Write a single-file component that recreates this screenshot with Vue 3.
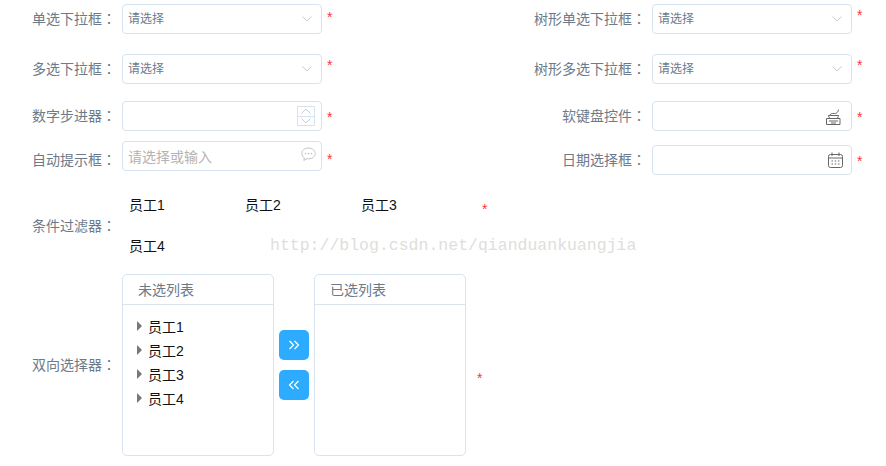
<script setup>
const staff = ['员工1', '员工2', '员工3', '员工4']
</script>

<template>
  <div class="page">
    <div class="top">
      <div class="col">
        <div class="field">
          <label class="label">单选下拉框<span class="colon">：</span></label>
          <div class="input"><span class="value">请选择</span>
            <svg class="chev" width="10" height="6" viewBox="0 0 10 6"><path d="M.5.5 5 5 9.5.5" /></svg>
          </div>
          <span class="star s1">*</span>
        </div>
        <div class="field gap20">
          <label class="label">多选下拉框<span class="colon">：</span></label>
          <div class="input"><span class="value">请选择</span>
            <svg class="chev" width="10" height="6" viewBox="0 0 10 6"><path d="M.5.5 5 5 9.5.5" /></svg>
          </div>
          <span class="star s2">*</span>
        </div>
        <div class="field gap17">
          <label class="label">数字步进器<span class="colon">：</span></label>
          <div class="input">
            <div class="stepper">
              <span class="step"><svg width="10" height="6" viewBox="0 0 10 6"><path d="M.5 5.5 5 1l4.500 4.500" /></svg></span>
              <span class="step"><svg width="10" height="6" viewBox="0 0 10 6"><path d="M.5.5 5 5 9.500.5" /></svg></span>
            </div>
          </div>
          <span class="star s3">*</span>
        </div>
        <div class="field gap10 low">
          <label class="label">自动提示框<span class="colon">：</span></label>
          <div class="input"><span class="hint">请选择或输入</span>
            <svg class="tail up" width="15" height="15" viewBox="0 0 15 15">
              <path class="bubble" d="M7.500 1C3.700 1 .8 3.400.8 6.500c0 1.800 1 3.300 2.500 4.300l-.5 2.700 3-1.800c.5.100 1.100.1 1.700.1 3.800 0 6.700-2.300 6.700-5.300S11.300 1 7.500 1Z" />
              <circle cx="4.500" cy="6.600" r=".8" /><circle cx="7.500" cy="6.600" r=".8" /><circle cx="10.500" cy="6.600" r=".8" />
            </svg>
          </div>
          <span class="star s4">*</span>
        </div>
      </div>

      <div class="col">
        <div class="field">
          <label class="label">树形单选下拉框<span class="colon">：</span></label>
          <div class="input"><span class="value">请选择</span>
            <svg class="chev" width="10" height="6" viewBox="0 0 10 6"><path d="M.5.5 5 5 9.5.5" /></svg>
          </div>
          <span class="star s5">*</span>
        </div>
        <div class="field gap20">
          <label class="label">树形多选下拉框<span class="colon">：</span></label>
          <div class="input"><span class="value">请选择</span>
            <svg class="chev" width="10" height="6" viewBox="0 0 10 6"><path d="M.5.5 5 5 9.5.5" /></svg>
          </div>
          <span class="star s2">*</span>
        </div>
        <div class="field gap17">
          <label class="label">软键盘控件<span class="colon">：</span></label>
          <div class="input">
            <svg class="tail kb" width="15" height="16" viewBox="0 0 15 16">
              <path class="dark" d="M.5 9.500h13.500v6H.5Z" />
              <path class="dark" d="M2.500 6.500h10c0 2-1.500 3-2.500 3H5c-1 0-2.500-1-2.500-3ZM4 6.500c0-2 2-2 4-2s4-.5 4.500-4M3 12h9M5 14h5" />
            </svg>
          </div>
          <span class="star s3">*</span>
        </div>
        <div class="field gap14">
          <label class="label">日期选择框<span class="colon">：</span></label>
          <div class="input">
            <svg class="tail cal" width="15" height="16" viewBox="0 0 15 16">
              <rect class="dark" x=".5" y="2.500" width="14" height="13" rx="2" />
              <path class="dark" d="M.5 6h14M4 .5v3.500M11 .5v3.500" />
              <path class="dots" d="M3.500 9h1.500M6.700 9h1.500M9.900 9h1.500M3.500 12h1.500M6.700 12h1.500M9.900 12h1.500" />
            </svg>
          </div>
          <span class="star s3">*</span>
        </div>
      </div>
    </div>

    <div class="field filter">
      <label class="label">条件过滤器<span class="colon">：</span></label>
      <div class="staff">
        <span v-for="name in staff" :key="name" class="staff-item">{{ name }}</span>
      </div>
      <span class="star s6">*</span>
    </div>

    <div class="field transfer">
      <label class="label">双向选择器<span class="colon">：</span></label>
      <div class="panel">
        <div class="panel-title">未选列表</div>
        <ul class="tree">
          <li v-for="name in staff" :key="name"><i class="arrow"></i>{{ name }}</li>
        </ul>
      </div>
      <div class="actions">
        <button class="move" type="button">
          <svg width="12" height="10" viewBox="0 0 12 10"><path d="m1.500 1 4 4-4 4M6.500 1l4 4-4 4" /></svg>
        </button>
        <button class="move" type="button">
          <svg width="12" height="10" viewBox="0 0 12 10"><path d="m5.500 1-4 4 4 4M10.500 1l-4 4 4 4" /></svg>
        </button>
      </div>
      <div class="panel">
        <div class="panel-title">已选列表</div>
      </div>
      <span class="star s7">*</span>
    </div>

    <div class="watermark">http://blog.csdn.net/qianduankuangjia</div>
  </div>
</template>

<style>
html, body { margin: 0; background: #fff; }
</style>

<style scoped>
.page {
  position: relative;
  width: 886px;
  height: 466px;
  overflow: hidden;
  padding-top: 4px;
  box-sizing: border-box;
  font-family: "Noto Sans CJK SC", "Liberation Sans", sans-serif;
  font-size: 14px;
  color: #6d7a8a;
}
.top { display: flex; }
.col { flex: none; width: 530px; }
.field { display: flex; align-items: center; }
.gap20 { margin-top: 20px; }
.gap17 { margin-top: 17px; }
.gap14 { margin-top: 14px; }
.gap10 { margin-top: 10px; }
.label {
  flex: none;
  width: 116px;
  margin: 0 6px 2px 0;
  text-align: right;
  line-height: 20px;
}
.colon { font-family: "Noto Sans CJK TC", sans-serif; }
.low .label { margin: 6px 6px 0 0; }
.input {
  flex: none;
  display: flex;
  align-items: center;
  justify-content: space-between;
  width: 200px;
  height: 30px;
  padding: 0 9px 0 5px;
  box-sizing: border-box;
  border: 1px solid #d7e3ee;
  border-radius: 4px;
  background: #fff;
}
.value { font-size: 12px; line-height: 16px; margin-bottom: 2px; color: #6d7a8a; }
.hint { font-size: 14px; color: #b3b3b3; }
.chev { margin-left: auto; }
svg path { fill: none; }
.chev path { stroke: #c5ced8; stroke-width: 1; }
.stepper {
  display: flex;
  flex-direction: column;
  width: 18px;
  height: 20px;
  margin-left: auto;
  margin-right: -3px;
  border: 1px solid #d7e3ee;
  box-sizing: border-box;
}
.step {
  flex: 1;
  display: flex;
  align-items: center;
  justify-content: center;
}
.step + .step { border-top: 1px solid #d7e3ee; }
.step path { stroke: #c5ced8; }
.tail { margin-left: auto; margin-right: -2px; }
.up { margin: -4px -4px 0 auto; }
.kb { margin: 2px 1px 0 auto; }
.cal { margin: 0 -1px 0 auto; }
.bubble { stroke: #c3c3c3; fill: none; }
.tail circle { fill: #c3c3c3; }
.dark { stroke: #666; fill: none; stroke-width: 1; }
.dots { stroke: #666; stroke-width: 1.200; }
.star {
  flex: none;
  color: #f33;
  font-size: 14px;
  line-height: 14px;
  font-family: "Liberation Sans", sans-serif;
}
.s1, .s2, .s3, .s4, .s5 { margin-left: 5px; }
.s1 { margin-top: -4px; }
.s2 { margin-top: -8px; }
.s3 { margin-top: 2px; }
.s4 { margin-top: 6px; }
.s5 { margin-top: -8px; }
.filter { margin-top: 10px; }
.staff {
  display: flex;
  flex-wrap: wrap;
  flex: none;
  width: 355px;
  padding-left: 7px;
  box-sizing: border-box;
  font-family: "Liberation Sans", "Noto Sans CJK SC", sans-serif;
  color: #111;
}
.staff-item { width: 116px; height: 41px; line-height: 41px; }
.s6 { margin: -34px 0 0 5px; }
.transfer { margin-top: 7px; }
.panel {
  flex: none;
  width: 152px;
  height: 182px;
  box-sizing: border-box;
  border: 1px solid #d7e3ee;
  border-radius: 5px;
}
.panel-title {
  height: 29px;
  line-height: 29px;
  padding-left: 15px;
  border-bottom: 1px solid #d7e3ee;
}
.tree {
  list-style: none;
  margin: 0;
  padding: 9px 0 0 14px;
  font-family: "Liberation Sans", "Noto Sans CJK SC", sans-serif;
  color: #111;
}
.tree li {
  display: flex;
  align-items: center;
  height: 24px;
}
.arrow {
  width: 0;
  height: 0;
  margin-right: 6px;
  border-style: solid;
  border-width: 5px 0 5px 5px;
  border-color: transparent transparent transparent #777;
}
.actions {
  flex: none;
  display: flex;
  flex-direction: column;
  gap: 10px;
  width: 40px;
  padding: 0 5px;
  box-sizing: border-box;
}
.move {
  display: flex;
  align-items: center;
  justify-content: center;
  width: 30px;
  height: 30px;
  padding: 0;
  border: 0;
  border-radius: 5px;
  background: #2dabff;
}
.move path { stroke: #fff; stroke-width: 1.200; }
.s7 { margin: 26px 0 0 11px; }
.watermark {
  position: absolute;
  left: 270px;
  top: 234px;
  font-family: "Liberation Mono", monospace;
  font-size: 16.5px;
  line-height: 24px;
  color: #e0dedb;
  white-space: nowrap;
  pointer-events: none;
}
</style>
